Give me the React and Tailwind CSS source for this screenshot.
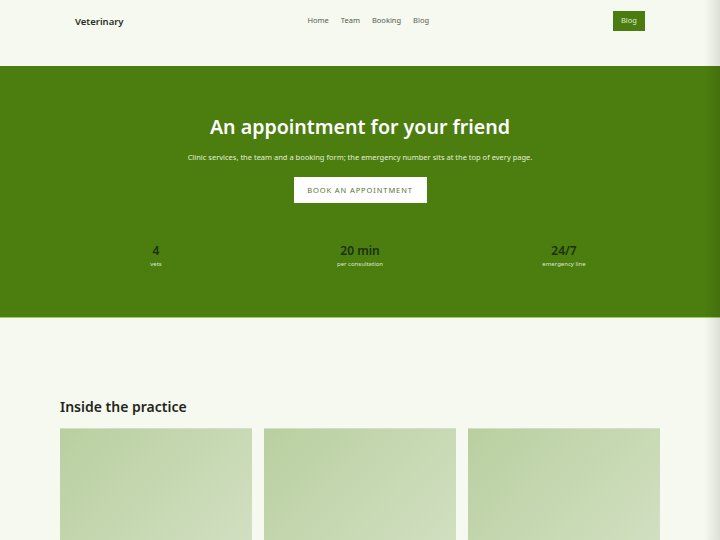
import React from "react";

const stats = [
  { value: "4", label: "vets" },
  { value: "20 min", label: "per consultation" },
  { value: "24/7", label: "emergency line" },
];

export default function App() {
  return (
    <div className="relative min-h-[540px] bg-[#f6f9ef] font-['Noto_Sans',sans-serif] text-[#1c2a12]">
      {/* header */}
      <header className="h-[66px]">
        <div className="mx-auto flex h-full w-[600px] items-start justify-between px-[15px] pt-[11px]">
          <div className="pt-[4px] text-[9.5px] font-semibold text-[#2a2f25]">Veterinary</div>
          <nav className="flex gap-[12px] pt-[4px] text-[7.5px] text-[#555b50]">
            <a>Home</a>
            <a>Team</a>
            <a>Booking</a>
            <a>Blog</a>
          </nav>
          <button className="flex h-[20px] w-[32px] items-center justify-center bg-[#4a7c10] text-[7.5px] text-[#dfeccf]">
            Blog
          </button>
        </div>
      </header>

      {/* hero */}
      <section className="h-[252px] border-b border-[#9ccc6e] bg-[#4b7d0f]">
        <div className="mx-auto flex w-[600px] flex-col items-center pt-[48px]">
          <h1 className="text-[19.6px] font-semibold leading-[26px] text-white">
            An appointment for your friend
          </h1>
          <p className="mt-[12px] text-[7.5px] text-[#e4efd6]">
            Clinic services, the team and a booking form; the emergency number sits at the top of every page.
          </p>
          <button className="mt-[14px] h-[26px] w-[133px] bg-white text-[7.5px] tracking-[0.12em] text-[#56752d]">
            BOOK AN APPOINTMENT
          </button>
          <div className="mt-[40px] grid w-full grid-cols-3 gap-3">
            {stats.map((s) => (
              <div key={s.label} className="flex flex-col items-center">
                <div className="text-[12px] font-semibold leading-[16px] text-[#1b300a]">{s.value}</div>
                <div className="text-[6px] leading-[10px] text-[#dbe8cb]">{s.label}</div>
              </div>
            ))}
          </div>
        </div>
      </section>

      {/* gallery */}
      <section className="mx-auto w-[600px] pt-[79px]">
        <h2 className="text-[14px] font-semibold leading-[20px] text-[#1f261a]">Inside the practice</h2>
        <div className="mt-[11px] grid grid-cols-3 gap-3">
          {[0, 1, 2].map((i) => (
            <div
              key={i}
              className="h-[200px] border-t border-[#d3dec6] bg-gradient-to-br from-[#b9cfa0] to-[#d8e4ca]"
            />
          ))}
        </div>
      </section>

      {/* right edge shade */}
      <div className="pointer-events-none absolute inset-y-0 right-0 w-[16px] bg-gradient-to-r from-transparent to-black/10" />
    </div>
  );
}
